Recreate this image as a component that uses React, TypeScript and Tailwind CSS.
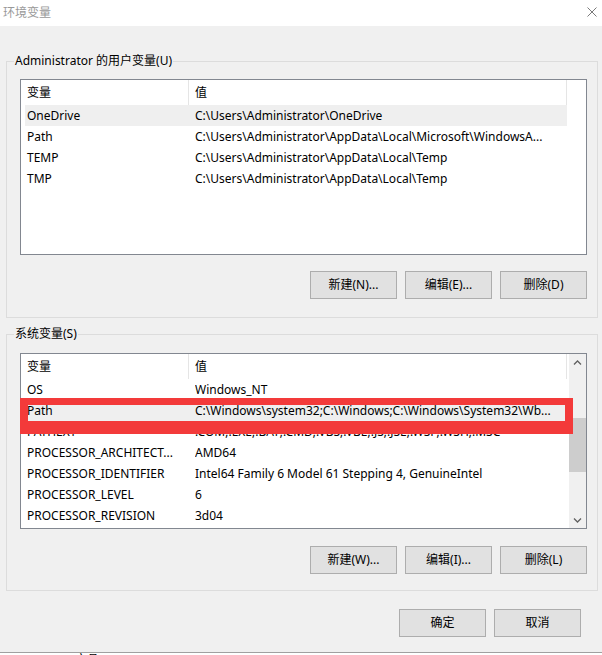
const userVars = [
  ['OneDrive', 'C:\\Users\\Administrator\\OneDrive'],
  ['Path', 'C:\\Users\\Administrator\\AppData\\Local\\Microsoft\\WindowsA...'],
  ['TEMP', 'C:\\Users\\Administrator\\AppData\\Local\\Temp'],
  ['TMP', 'C:\\Users\\Administrator\\AppData\\Local\\Temp'],
];

const sysVars = [
  ['OS', 'Windows_NT'],
  ['Path', 'C:\\Windows\\system32;C:\\Windows;C:\\Windows\\System32\\Wb...'],
  ['PATHEXT', '.COM;.EXE;.BAT;.CMD;.VBS;.VBE;.JS;.JSE;.WSF;.WSH;.MSC'],
  ['PROCESSOR_ARCHITECT...', 'AMD64'],
  ['PROCESSOR_IDENTIFIER', 'Intel64 Family 6 Model 61 Stepping 4, GenuineIntel'],
  ['PROCESSOR_LEVEL', '6'],
  ['PROCESSOR_REVISION', '3d04'],
];

const Button = ({ label }: { label: string }) => (
  <div className="w-[87px] h-[28px] border border-[#adadad] bg-[#e1e1e1] flex items-center justify-center text-black">
    {label}
  </div>
);

const Chevron = ({ down }: { down?: boolean }) => (
  <svg width="9" height="6" viewBox="0 0 9 6">
    <path
      d={down ? 'M1 1.5 L4.5 5 L8 1.5' : 'M1 4.5 L4.5 1 L8 4.5'}
      fill="none"
      stroke="#606060"
      strokeWidth="1.3"
    />
  </svg>
);

const Scrollbar = () => (
  <div className="w-[17px] bg-[#f0f0f0] flex flex-col">
    <div className="h-[17px] flex items-center justify-center">
      <Chevron />
    </div>
    <div className="flex-1 flex flex-col">
      <div className="h-[47px]"></div>
      <div className="h-[54px] bg-[#cdcdcd]"></div>
    </div>
    <div className="h-[17px] flex items-center justify-center">
      <Chevron down />
    </div>
  </div>
);

const ListView = ({
  rows,
  selected,
  scroll,
  marked,
}: {
  rows: string[][];
  selected: number;
  scroll?: boolean;
  marked?: boolean;
}) => (
  <div className="relative">
    <div className="h-[176px] border border-[#828790] bg-white flex overflow-hidden">
      <div className="flex-1 min-w-0">
        <div className="flex h-[25px]">
          <div className="w-[168px] border-r border-[#e5e5e5] pl-[6px] flex items-center">变量</div>
          <div className="w-[378px] border-r border-[#e5e5e5] pl-[6px] flex items-center">值</div>
        </div>
        {rows.map((row, i) => (
          <div
            key={i}
            className={`ml-[4px] w-[542px] h-[21px] flex items-center whitespace-nowrap ${
              i === selected ? 'bg-[#efefef]' : ''
            }`}
          >
            <div className="w-[170px] pl-[2px] overflow-hidden">{row[0]}</div>
            <div className="flex-1 overflow-hidden">{row[1]}</div>
          </div>
        ))}
      </div>
      {scroll && <Scrollbar />}
    </div>
    {marked && (
      <div className="absolute left-0 top-[45px] w-[553px] h-[36px] border-[#f33a3a] border-t-[7px] border-l-[8px] border-r-[8px] border-b-[13px]"></div>
    )}
  </div>
);

const Group = ({
  title,
  children,
  className,
  inner,
}: {
  title: string;
  children: React.ReactNode;
  className: string;
  inner: string;
}) => (
  <fieldset className={`ml-[6px] w-[592px] border border-[#dcdcdc] ${className}`}>
    <legend className="ml-[7px] px-[1px] leading-[16px]">{title}</legend>
    <div className={`pl-[13px] pr-[10px] ${inner}`}>{children}</div>
  </fieldset>
);

export default function App() {
  return (
    <div className="w-[602px] h-[655px] overflow-hidden bg-[#f0f0f0] text-[12px] text-black [font-family:'Noto_Sans','Noto_Sans_CJK_SC',sans-serif]">
      <div className="relative h-[26px] bg-white flex items-center pl-[3px] text-[#999999]">
        环境变量
        <svg className="absolute right-[5px] top-[7px]" width="10" height="10" viewBox="0 0 10 10">
          <path d="M0.5 0.5 L9.5 9.5 M9.5 0.5 L0.5 9.5" stroke="#7a7a7a" strokeWidth="1" fill="none" />
        </svg>
      </div>

      <div className="h-[626px] flex flex-col">
        <Group title="Administrator 的用户变量(U)" className="mt-[27px]" inner="pt-[10px] pb-[18px]">
          <ListView rows={userVars} selected={0} />
          <div className="mt-[16px] flex justify-end gap-[8px]">
            <Button label="新建(N)..." />
            <Button label="编辑(E)..." />
            <Button label="删除(D)" />
          </div>
        </Group>

        <Group title="系统变量(S)" className="mt-[8px]" inner="pt-[11px] pb-[16px]">
          <ListView rows={sysVars} selected={1} scroll marked />
          <div className="mt-[17px] flex justify-end gap-[8px]">
            <Button label="新建(W)..." />
            <Button label="编辑(I)..." />
            <Button label="删除(L)" />
          </div>
        </Group>

        <div className="mt-[18px] pr-[21px] flex justify-end gap-[8px]">
          <Button label="确定" />
          <Button label="取消" />
        </div>
      </div>

      <div className="h-[1px] bg-[#a0a0a0]"></div>
      <div className="h-[2px] bg-white overflow-hidden">
        <div className="pl-[75px] leading-[12px] pt-[1px] text-black">产品 ID: 00331-10000-00001-AA236</div>
      </div>
    </div>
  );
}
